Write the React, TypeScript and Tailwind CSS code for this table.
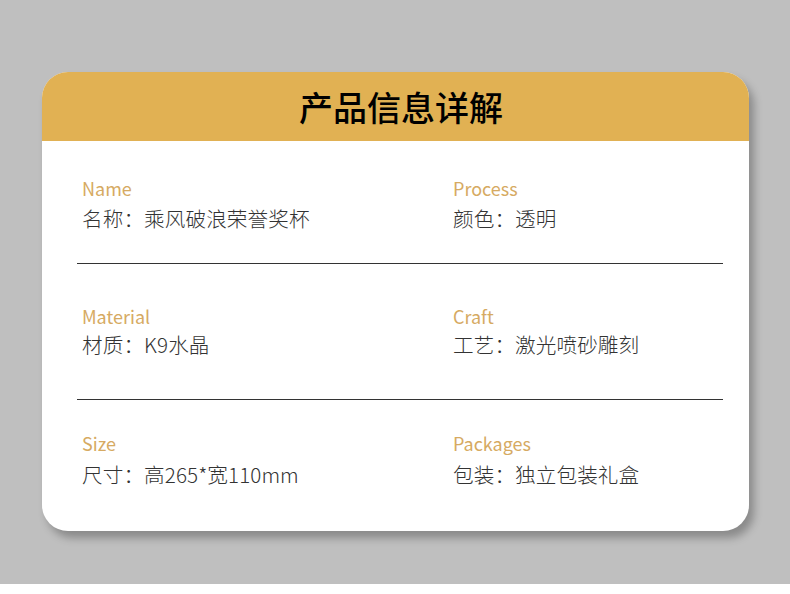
import React from "react";

const font = { fontFamily: '"Noto Sans CJK SC", "Noto Sans", sans-serif' };

type Item = { label: string; value: string };

function Cell({ item, gap }: { item: Item; gap: string }) {
  return (
    <div className={`flex flex-col ${gap}`}>
      <div className="text-[18px] leading-[24px] font-normal text-[#d6aa62]">{item.label}</div>
      <div className="text-[20.6px] leading-[28px] font-light tracking-[0.1px] text-[#333333]">{item.value}</div>
    </div>
  );
}

function Row({ left, right, gap, className }: { left: Item; right: Item; gap: string; className: string }) {
  return (
    <div className={`grid grid-cols-[371px_1fr] pl-[40px] ${className}`}>
      <Cell item={left} gap={gap} />
      <Cell item={right} gap={gap} />
    </div>
  );
}

function Divider({ className }: { className: string }) {
  return <div className={`ml-[35px] mr-[26px] h-px bg-[#333333] ${className}`} />;
}

export default function App() {
  return (
    <div className="bg-white w-[790px] h-[594px]" style={font}>
      <div className="bg-[#bfbfbf] h-[584px] pt-[72px] pl-[42px]">
        <div className="w-[707px] h-[459px] rounded-[26px] bg-white overflow-hidden shadow-[5px_7px_8px_rgba(0,0,0,0.28)] flex flex-col">
          <div className="h-[69px] bg-[#e1b153] flex items-center justify-center pl-[11px]">
            <h1 className="text-[34px] leading-[40px] font-medium text-black tracking-normal">产品信息详解</h1>
          </div>
          <Row
            className="pt-[35px]"
            gap="gap-[4px]"
            left={{ label: "Name", value: "名称：乘风破浪荣誉奖杯" }}
            right={{ label: "Process", value: "颜色：透明" }}
          />
          <Divider className="mt-[31px]" />
          <Row
            className="pt-[40px]"
            gap="gap-[2px]"
            left={{ label: "Material", value: "材质：K9水晶" }}
            right={{ label: "Craft", value: "工艺：激光喷砂雕刻" }}
          />
          <Divider className="mt-[41px]" />
          <Row
            className="pt-[31px]"
            gap="gap-[5px]"
            left={{ label: "Size", value: "尺寸：高265*宽110mm" }}
            right={{ label: "Packages", value: "包装：独立包装礼盒" }}
          />
        </div>
      </div>
    </div>
  );
}
